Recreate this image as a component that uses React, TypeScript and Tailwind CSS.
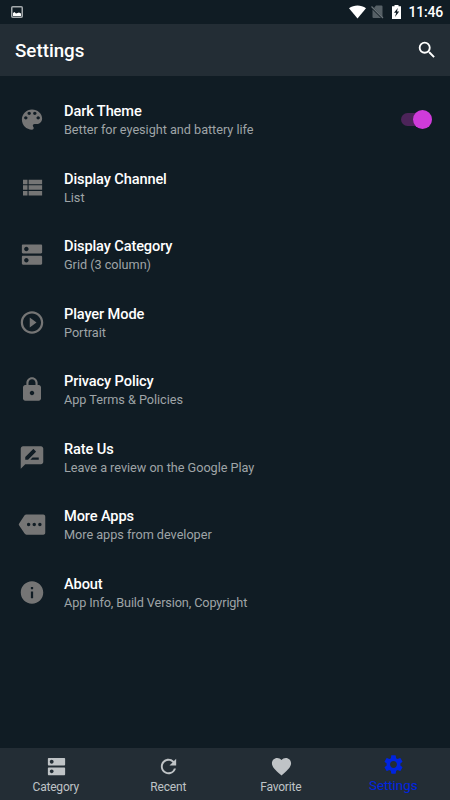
import type { ReactNode } from "react";
import { MdDns, MdPlayCircleOutline, MdLock, MdRateReview, MdMore, MdInfo, MdRefresh, MdFavorite, MdSettings, MdSearch } from "react-icons/md";

function PaletteIcon() {
  return (
    <svg viewBox="0 0 24 24" width="27" height="27" fill="currentColor">
      <path d="M12 3c-4.97 0-9 4.03-9 9s4.03 9 9 9c.83 0 1.5-.67 1.5-1.5 0-.39-.15-.74-.39-1.01-.23-.26-.38-.61-.38-.99 0-.83.67-1.5 1.5-1.5H16c2.76 0 5-2.24 5-5 0-4.42-4.03-8-9-8zm-5.5 9c-.83 0-1.5-.67-1.5-1.5S5.67 9 6.5 9 8 9.67 8 10.5 7.33 12 6.5 12zm3-4C8.67 8 8 7.33 8 6.5S8.67 5 9.5 5s1.5.67 1.5 1.5S10.33 8 9.5 8zm5 0c-.83 0-1.5-.67-1.5-1.5S13.67 5 14.5 5s1.5.67 1.5 1.5S15.33 8 14.5 8zm3 4c-.83 0-1.5-.67-1.5-1.5S16.67 9 17.5 9s1.5.67 1.5 1.5-.67 1.5-1.5 1.5z" />
    </svg>
  );
}

function ViewListIcon() {
  return (
    <svg viewBox="0 0 24 24" width="27" height="27" fill="currentColor">
      <path d="M4 14h4v-4H4v4zm0 5h4v-4H4v4zM4 9h4V5H4v4zm5 5h12v-4H9v4zm0 5h12v-4H9v4zM9 5v4h12V5H9z" />
    </svg>
  );
}

const rows: { icon: ReactNode; title: string; detail: string; tight?: boolean }[] = [
  { icon: <PaletteIcon />, title: "Dark Theme", detail: "Better for eyesight and battery life" },
  { icon: <ViewListIcon />, title: "Display Channel", detail: "List" },
  { icon: <MdDns size={27} />, title: "Display Category", detail: "Grid (3 column)" },
  { icon: <MdPlayCircleOutline size={27} />, title: "Player Mode", detail: "Portrait" },
  { icon: <MdLock size={27} />, title: "Privacy Policy", detail: "App Terms & Policies" },
  { icon: <MdRateReview size={27} />, title: "Rate Us", detail: "Leave a review on the Google Play" },
  { icon: <MdMore size={27} />, title: "More Apps", detail: "More apps from developer" },
  { icon: <MdInfo size={27} />, title: "About", detail: "App Info, Build Version, Copyright", tight: true },
];

function StatusBar() {
  return (
    <div className="flex h-6 items-center pl-[11px] pr-[7px] text-white">
      <svg width="12" height="12" viewBox="0 0 12 12">
        <rect x="0.75" y="0.75" width="10.5" height="10.5" rx="1" fill="none" stroke="#a4a9ac" strokeWidth="1.5" />
        <path d="M2 10V7l1.500-1 1.500 1.500 1.500-.5L8 6.500l2 1V10z" fill="#fff" />
      </svg>
      <svg className="ml-auto" width="17" height="14" viewBox="0 0 17 14">
        <path d="M0 3.200C5 -0.4 12 -0.4 17 3.200L8.500 13.500z" fill="#fff" />
      </svg>
      <svg className="ml-[5px]" width="13" height="14" viewBox="0 0 13 14">
        <path d="M5 .5h5.500a1 1 0 0 1 1 1V12L3 3zM1.500 4.500L10 13H2.500a1 1 0 0 1-1-1z" fill="#566066" />
        <path d="M0.500 1.500l11.500 11.500" stroke="#687177" strokeWidth="1.200" />
      </svg>
      <svg className="ml-[8px]" width="9" height="14" viewBox="0 0 9 14">
        <path d="M2.500 0h4v1.300H9V14H0V1.300h2.500z" fill="#fff" />
        <path d="M5.800 3L2 7.800h2.200L3 12 7.200 6.500H5z" fill="#101c24" />
      </svg>
      <span className="ml-[7px] text-[14px] font-medium leading-6 tracking-[-0.2px]">11:46</span>
    </div>
  );
}

function NavItem({ icon, label, active }: { icon: ReactNode; label: string; active?: boolean }) {
  return (
    <div className={active ? "flex w-1/4 flex-col items-center pt-[5.4px] text-[#0024e0]" : "flex w-1/4 flex-col items-center pt-[7px] text-[#bfc3c6]"}>
      {icon}
      <span className={active ? "-ml-px text-[13.5px] leading-[18px] tracking-[-0.1px]" : "-ml-px text-[12px] leading-[18px] tracking-[-0.2px]"}>{label}</span>
    </div>
  );
}

export default function App() {
  return (
    <div className="flex h-[800px] w-[450px] flex-col overflow-hidden bg-[#101c24] font-[Roboto,sans-serif]">
      <StatusBar />
      <header className="flex h-[52px] items-center justify-between bg-[#232d35] pl-[15px] pr-3 text-white">
        <h1 className="pt-[2px] text-[18.75px] font-medium">Settings</h1>
        <MdSearch size={22} />
      </header>
      <main className="flex-1 pt-[9.8px]">
        {rows.map((row, i) => (
          <div key={row.title} className="flex h-[67.5px] items-center pl-[18px] pr-[18px]">
            <span className="w-[27px] text-[#757575]"><span className="block translate-x-[0.5px]">{row.icon}</span></span>
            <div className="ml-[19px] flex-1 pt-[2.4px]">
              <div className="text-[14.6px] font-medium leading-[19px] tracking-[-0.12px] text-white">{row.title}</div>
              <div className={row.tight ? "text-[12.7px] leading-[18px] tracking-[-0.12px] text-[#9fa4a7]" : "text-[12.7px] leading-[18px] tracking-[-0.03px] text-[#9fa4a7]"}>{row.detail}</div>
            </div>
            {i === 0 && (
              <span className="flex h-[13px] w-[31.5px] items-center justify-end rounded-full bg-[#4c2459]">
                <span className="size-[19.5px] shrink-0 rounded-full bg-[#cf3bda]" />
              </span>
            )}
          </div>
        ))}
      </main>
      <nav className="flex h-[52.5px] bg-[#232d35]">
        <NavItem icon={<MdDns size={23} />} label="Category" />
        <NavItem icon={<MdRefresh size={23} />} label="Recent" />
        <NavItem icon={<MdFavorite size={23} />} label="Favorite" />
        <NavItem icon={<MdSettings size={23} />} label="Settings" active />
      </nav>
    </div>
  );
}
